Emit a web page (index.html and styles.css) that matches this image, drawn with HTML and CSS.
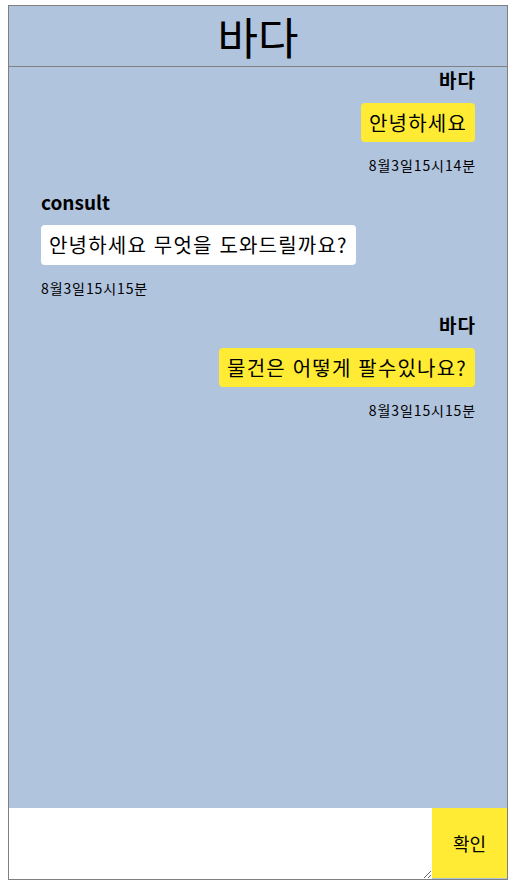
FILE: index.html
```html
<!DOCTYPE html>
<html lang="ko">
<head>
<meta charset="utf-8">
<title>바다</title>
<link rel="stylesheet" href="styles.css">
</head>
<body>
<div class="chat">
  <header class="chat-header">바다</header>
  <main class="messages">
    <div class="msg mine">
      <div class="name">바다</div>
      <div class="bubble">안녕하세요</div>
      <div class="time">8월3일15시14분</div>
    </div>
    <div class="msg other">
      <div class="name">consult</div>
      <div class="bubble">안녕하세요 무엇을 도와드릴까요?</div>
      <div class="time">8월3일15시15분</div>
    </div>
    <div class="msg mine">
      <div class="name">바다</div>
      <div class="bubble">물건은 어떻게 팔수있나요?</div>
      <div class="time">8월3일15시15분</div>
    </div>
  </main>
  <form class="composer">
    <textarea class="input" autofocus></textarea>
    <button type="button" class="send">확인</button>
  </form>
</div>
</body>
</html>
```
FILE: styles.css
```css
html, body {
  margin: 0;
  padding: 0;
  background: #ffffff;
}
body {
  font-family: "Noto Sans CJK KR", "Noto Sans", sans-serif;
  color: #000;
}
.chat {
  box-sizing: border-box;
  width: 500px;
  height: 875px;
  margin: 5px 0 0 8px;
  border: 1px solid #808080;
  background: #b0c4de;
  display: flex;
  flex-direction: column;
}
.chat-header {
  height: 60px;
  line-height: 60px;
  border-bottom: 1px solid #808080;
  text-align: center;
  font-size: 44px;
  flex: none;
}
.messages {
  flex: 1;
  padding: 1px 32px 0 32px;
  display: flex;
  flex-direction: column;
}
.msg {
  display: flex;
  flex-direction: column;
  margin-bottom: 15px;
}
.msg.mine { align-items: flex-end; }
.msg.other { align-items: flex-start; }
.name {
  font-size: 19px;
  font-weight: bold;
  line-height: 24px;
}
.msg.mine .name {
  letter-spacing: 1px;
  margin-right: -1px;
}
.bubble {
  margin-top: 11px;
  padding: 0 8px;
  height: 39px;
  line-height: 39px;
  font-size: 20px;
  letter-spacing: 1.2px;
  border-radius: 4px;
  background: #ffeb33;
  white-space: nowrap;
}
.msg.other .bubble {
  background: #ffffff;
  height: 40px;
  line-height: 40px;
}
.time {
  margin-top: 13px;
  font-size: 14px;
  line-height: 20px;
  letter-spacing: 0.9px;
}
.msg.mine .time {
  margin-right: -1px;
}
.composer {
  display: flex;
  height: 71px;
  margin: 0;
  flex: none;
}
.input {
  flex: 1;
  margin: 0;
  border: none;
  outline: none;
  padding: 2px 3px;
  font-size: 16px;
  background: #fff;
  resize: both;
}
.send {
  width: 75px;
  height: 70px;
  border: none;
  margin: 0;
  padding: 0;
  background: #ffeb33;
  font-family: "Noto Sans CJK KR", sans-serif;
  font-size: 18px;
  color: #000;
}
```
